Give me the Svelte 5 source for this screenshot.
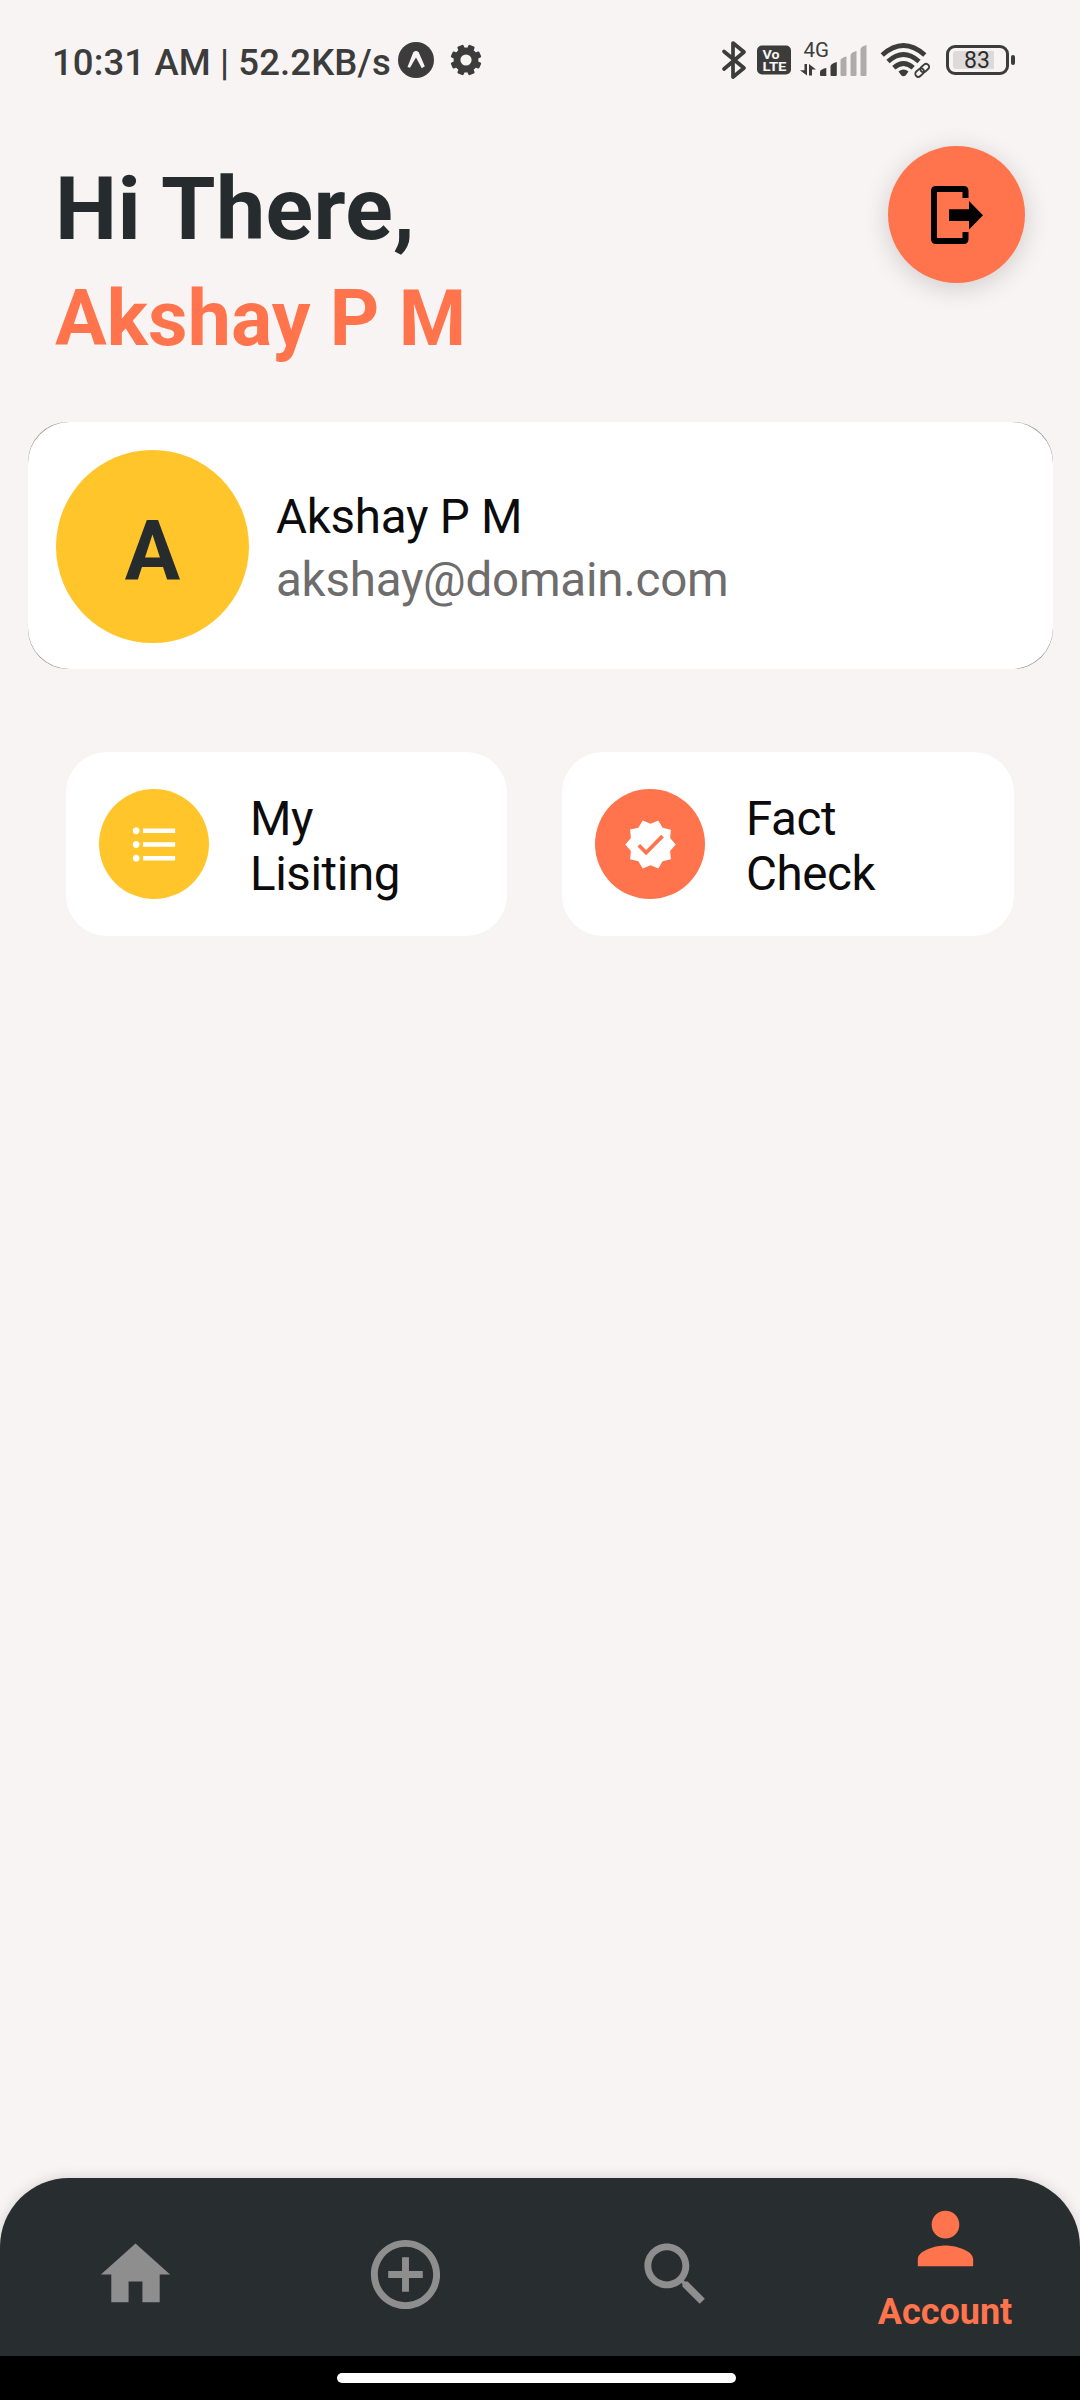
<script>
  const tiles = [
    {
      label: 'My Lisiting',
      tone: 'yellow',
      icon: 'M4 10.5c-.83 0-1.5.67-1.5 1.5s.67 1.5 1.5 1.5 1.5-.67 1.5-1.5-.67-1.5-1.5-1.5zm0-6c-.83 0-1.5.67-1.5 1.5S3.17 7.5 4 7.5 5.5 6.83 5.5 6 4.83 4.5 4 4.5zm0 12c-.83 0-1.5.68-1.5 1.5s.68 1.5 1.5 1.5 1.5-.68 1.5-1.5-.67-1.5-1.5-1.5zM7 19h14v-2H7v2zm0-6h14v-2H7v2zm0-8v2h14V5H7z'
    },
    {
      label: 'Fact Check',
      tone: 'orange',
      icon: 'M23 12l-2.44-2.79.34-3.69-3.61-.82-1.89-3.2L12 2.96 8.6 1.5 6.71 4.69 3.1 5.5l.34 3.7L1 12l2.44 2.79-.34 3.7 3.61.82L8.6 22.5l3.4-1.47 3.4 1.46 1.89-3.19 3.61-.82-.34-3.69L23 12zm-12.91 4.72l-3.8-3.81 1.18-1.18 2.62 2.63 6.55-6.57 1.18 1.18-7.73 7.75z'
    }
  ];

  const tabs = [
    { id: 'home', icon: 'M10 20v-6h4v6h5v-8h3L12 3 2 12h3v8z' },
    {
      id: 'add',
      icon: 'M13 7h-2v4H7v2h4v4h2v-4h4v-2h-4V7zm-1-5C6.48 2 2 6.48 2 12s4.48 10 10 10 10-4.48 10-10S17.52 2 12 2zm0 18c-4.41 0-8-3.59-8-8s3.59-8 8-8 8 3.59 8 8-3.59 8-8 8z'
    },
    {
      id: 'search',
      icon: 'M15.5 14h-.79l-.28-.27C15.41 12.59 16 11.11 16 9.5 16 5.91 13.09 3 9.5 3S3 5.91 3 9.5 5.91 16 9.5 16c1.61 0 3.09-.59 4.23-1.57l.27.28v.79l5 4.99L20.49 19l-4.99-5zm-6 0C7.01 14 5 11.99 5 9.5S7.01 5 9.5 5 14 7.01 14 9.5 11.99 14 9.5 14z'
    },
    {
      id: 'account',
      label: 'Account',
      icon: 'M12 12c2.21 0 4-1.79 4-4s-1.79-4-4-4-4 1.79-4 4 1.79 4 4 4zm0 2c-2.67 0-8 1.34-8 4v2h16v-2c0-2.66-5.33-4-8-4z'
    }
  ];

  const teeth = [22.5, 67.5, 112.5, 157.5, 202.5, 247.5, 292.5, 337.5];
</script>

<div class="screen">
  <div class="status">
    <div class="left">
      <span class="clock">10:31 AM | 52.2KB/s</span>
      <svg class="expo" width="36" height="36" viewBox="0 0 36 36">
        <circle cx="18" cy="18" r="18" fill="#3c3c3c" />
        <path d="M9.5 25 15.3 10.3Q18 7.8 20.7 10.3L26.8 24.2 23.8 26.2 18 15.6 12 25.8z" fill="#f8f4f3" />
      </svg>
      <svg class="gear" width="32" height="32" viewBox="-16 -16 32 32">
        {#each teeth as angle}
          <rect x="-3.3" y="-15.4" width="6.6" height="8" rx="1.2" transform="rotate({angle})" fill="#3c3c3c" />
        {/each}
        <circle r="9" fill="none" stroke="#3c3c3c" stroke-width="6.8" />
      </svg>
    </div>
    <div class="right">
      <svg class="bluetooth" width="26" height="40" viewBox="0 0 26 40" fill="none" stroke="#3c3c3c" stroke-width="3.7" stroke-linejoin="round" stroke-linecap="round">
        <path d="M3 11.5 23 28 12 37V3L23 12 3 29" />
      </svg>
      <svg class="volte" width="34" height="30" viewBox="0 0 34 30">
        <rect y=".5" width="34" height="29" rx="5" fill="#3c3c3c" />
        <text x="5.5" y="13.8" textLength="17" lengthAdjust="spacingAndGlyphs">Vo</text>
        <text x="5.5" y="26.3" textLength="24" lengthAdjust="spacingAndGlyphs">LTE</text>
      </svg>
      <svg class="signal" width="68" height="52" viewBox="0 -6 68 52">
        <text x="3.4" y="17" textLength="25.5" lengthAdjust="spacingAndGlyphs">4G</text>
        <g fill="#3c3c3c">
          <path d="M4.5 24H7v11.5L0 30.2h4.5z" />
          <path d="M9 35.5V24l7 5.5h-4v6z" />
          <path d="M20 31.5q1-2.5 6.3-3.5v8H21q-1 0-1-1z" />
          <path d="M30.5 26q1-2.5 6.3-4v13q0 1-1 1h-4.3q-1 0-1-1z" />
        </g>
        <g fill="#aeabaa">
          <path d="M40.5 20q1-2.5 6-3.5v18.5q0 1-1 1h-4q-1 0-1-1z" />
          <path d="M50.5 15q1-3 6-4v24q0 1-1 1h-4q-1 0-1-1z" />
          <path d="M60.5 9q1-3 6-4v30q0 1-1 1h-4q-1 0-1-1z" />
        </g>
      </svg>
      <svg class="wifi" width="50" height="38" viewBox="0 0 50 38">
        <g fill="none" stroke="#3c3c3c" stroke-width="4.8">
          <path d="M2.2 14q21.300-19 42.600 0" />
          <path d="M8 20.500q15.500-14 31 0" />
          <path d="M13.800 26.800q9.700-8.600 19.400 0" />
        </g>
        <path d="M18.500 30.500q5-4 10 0l-2.700 3.700q-2.300 2-4.600 0z" fill="#3c3c3c" />
        <g fill="none" stroke="#3c3c3c" stroke-width="1.9" transform="translate(42.2 29.3) rotate(-42)">
          <rect x="-8.2" y="-3" width="9.6" height="6" rx="3" />
          <rect x="-1.4" y="-3" width="9.6" height="6" rx="3" />
        </g>
      </svg>
      <div class="battery"><span>83</span></div>
      <i class="nub"></i>
    </div>
  </div>

  <header>
    <div>
      <h1>Hi There,</h1>
      <h2>Akshay P M</h2>
    </div>
    <button class="logout" aria-label="Log out">
      <svg width="54" height="60" viewBox="0 0 54 60">
        <path d="M35.500 13V6q0-2-2-2h-27.500q-2 0-2 2v48q0 2 2 2h27.500q2 0 2-2v-7" fill="none" stroke="#000" stroke-width="6" />
        <path d="M19 24.300h20V16l14 14.200-14 14.300V36H19z" />
      </svg>
    </button>
  </header>

  <section class="profile">
    <div class="panel">
      <div class="avatar">A</div>
      <div class="details">
        <span>Akshay P M</span>
        <span class="email">akshay@domain.com</span>
      </div>
    </div>
  </section>

  <section class="tiles">
    {#each tiles as tile}
      <div class="tile {tile.tone}">
        <div class="badge">
          <svg width="55" height="55" viewBox="0 0 24 24"><path d={tile.icon} fill="#fff" /></svg>
        </div>
        <p>{tile.label}</p>
      </div>
    {/each}
  </section>

  <nav>
    {#each tabs as tab}
      <div class="tab" class:active={tab.label}>
        <svg width="83" height="83" viewBox="0 0 24 24"><path d={tab.icon} fill="currentColor" /></svg>
        {#if tab.label}<span>{tab.label}</span>{/if}
      </div>
    {/each}
  </nav>
  <div class="gesture"><i></i></div>
</div>

<style>
  :global(body) {
    margin: 0;
    background: #f8f4f3;
  }
  .screen {
    box-sizing: border-box;
    width: 1080px;
    height: 2400px;
    display: flex;
    flex-direction: column;
    background: #f8f4f3;
    font-family: Roboto, sans-serif;
    color: #0c0c0c;
    overflow: hidden;
  }
  svg {
    display: block;
    flex: none;
  }
  .status {
    height: 120px;
    flex: none;
    display: flex;
    align-items: center;
    justify-content: space-between;
    padding: 0 65px 0 52px;
  }
  .left,
  .right {
    display: flex;
    align-items: center;
  }
  .clock {
    width: 346px;
    padding-top: 5px;
    font-size: 36.5px;
    font-weight: 500;
    letter-spacing: 0.12px;
    line-height: 44px;
    white-space: nowrap;
    color: #3c3c3c;
  }
  .gear {
    margin-left: 16px;
  }
  .volte {
    margin-left: 10px;
  }
  .volte text {
    font: 700 13px Roboto, sans-serif;
    fill: #f8f4f3;
  }
  .signal {
    margin-left: 9px;
  }
  .signal text {
    font: 400 20px Roboto, sans-serif;
    fill: #3c3c3c;
  }
  .wifi {
    margin-left: 12px;
  }
  .battery {
    box-sizing: border-box;
    width: 63px;
    height: 30px;
    margin-left: 16px;
    padding: 3px 12px 3px 4px;
    border: 3px solid #3c3c3c;
    border-radius: 9px;
  }
  .battery span {
    display: block;
    height: 18px;
    background: #dedad9;
    border-radius: 3px 0 0 3px;
    padding-left: 11px;
    font-size: 23px;
    line-height: 20px;
    color: #2c2c2c;
  }
  .nub {
    width: 4px;
    height: 10px;
    margin-left: 2px;
    border-radius: 2px;
    background: #3c3c3c;
  }
  header {
    height: 276px;
    flex: none;
    display: flex;
    justify-content: space-between;
    align-items: flex-start;
    padding: 26px 55px 0 55px;
  }
  h1,
  h2 {
    margin: 0;
    font-weight: 700;
    line-height: 110px;
  }
  h1 {
    padding-top: 8px;
    font-size: 88px;
    letter-spacing: 0.35px;
    color: #262c2e;
  }
  h2 {
    font-size: 77px;
    letter-spacing: 0.1px;
    color: #ff744c;
  }
  .logout {
    width: 137px;
    height: 137px;
    padding: 0;
    border: 0;
    border-radius: 50%;
    background: #ff744c;
    display: flex;
    align-items: center;
    justify-content: center;
    box-shadow: 0 5px 26px rgba(0, 0, 0, 0.16);
  }
  /* The grey layer shows only as a hairline round each corner. */
  .profile {
    flex: none;
    margin: 0 27px 0 28px;
    border-radius: 40px;
    background: #8c8c8c;
  }
  .panel {
    box-sizing: border-box;
    height: 247px;
    padding: 2px 28px 0;
    display: flex;
    align-items: center;
    gap: 27px;
    border-radius: 41.5px;
    background: #fff;
  }
  .avatar {
    box-sizing: border-box;
    width: 193px;
    height: 193px;
    padding-top: 9px;
    border-radius: 50%;
    background: #ffc52b;
    color: #262c2e;
    font-size: 82.5px;
    font-weight: 700;
    line-height: 185px;
    text-align: center;
  }
  .details {
    display: flex;
    flex-direction: column;
    padding-top: 4px;
    font-size: 47.5px;
    letter-spacing: -0.24px;
    line-height: 63px;
  }
  .email {
    color: #6e6c6c;
  }
  .tiles {
    display: grid;
    grid-template-columns: 441px 452px;
    gap: 55px;
    margin: 83px 66px 0;
  }
  .tile {
    box-sizing: border-box;
    height: 184px;
    padding: 0 33px;
    display: flex;
    align-items: center;
    gap: 41px;
    border-radius: 41px;
    background: #fff;
  }
  .badge {
    width: 110px;
    height: 110px;
    flex: none;
    border-radius: 50%;
    display: flex;
    align-items: center;
    justify-content: center;
  }
  .yellow .badge {
    background: #ffc52b;
  }
  .orange .badge {
    background: #ff744c;
  }
  .tile p {
    width: min-content;
    margin: 0;
    padding-top: 6px;
    font-size: 47.5px;
    letter-spacing: -0.4px;
    line-height: 55px;
  }
  nav {
    height: 178px;
    flex: none;
    margin-top: auto;
    display: grid;
    grid-template-columns: repeat(4, 1fr);
    border-radius: 69px 69px 0 0;
    background: #282d2f;
    box-shadow: 0 0 14px rgba(0, 0, 0, 0.14);
  }
  .tab {
    display: flex;
    flex-direction: column;
    align-items: center;
    padding-top: 55px;
    color: #8e8e8e;
  }
  .active {
    padding-top: 19px;
    color: #ff744c;
  }
  .tab span {
    margin-top: 12px;
    font-size: 36px;
    font-weight: 700;
    line-height: 40px;
  }
  .gesture {
    height: 44px;
    flex: none;
    display: flex;
    justify-content: center;
    padding-top: 17px;
    box-sizing: border-box;
    background: #000;
    z-index: 1;
  }
  .gesture i {
    width: 399px;
    height: 10px;
    margin-right: 7px;
    border-radius: 5px;
    background: #fff;
  }
</style>
